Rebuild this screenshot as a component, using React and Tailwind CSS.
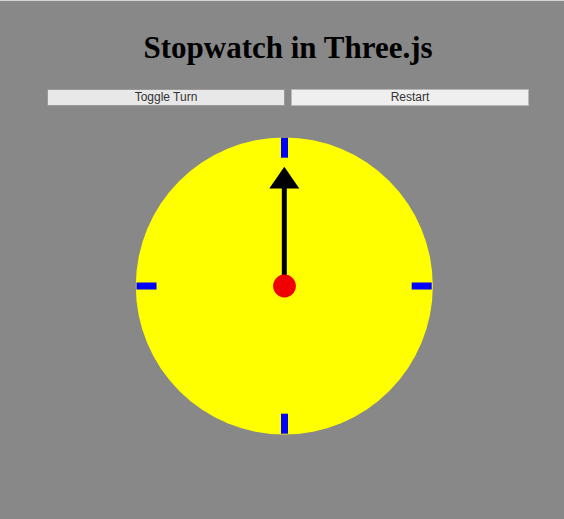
export default function App() {
  return (
    <div className="w-[564px] h-[519px] bg-[#888888] border-t border-[#d4d4d4] overflow-hidden flex flex-col">
      <h1
        className="mt-[31px] ml-[47px] w-[482px] text-center text-[31px] leading-[32px] font-bold text-black"
        style={{ fontFamily: '"Liberation Serif", "Times New Roman", serif' }}
      >
        Stopwatch in Three.js
      </h1>
      <div
        className="mt-[25px] ml-[47px] w-[482px] flex gap-[6px]"
        style={{ fontFamily: '"Liberation Sans", Arial, sans-serif' }}
      >
        <button className="flex-1 h-[17px] bg-[#e8e8e8] border border-[#9a9a9a] text-[12px] leading-[15px] text-[#333]">
          Toggle Turn
        </button>
        <button className="flex-1 h-[17px] bg-[#efefef] border border-[#b8b8b8] text-[12px] leading-[15px] text-[#333]">
          Restart
        </button>
      </div>
      <div className="mt-[30px] ml-[134px]">
        <svg width="300" height="300" viewBox="0 0 300 300">
          <circle cx="150.3" cy="150" r="148.5" fill="#ffff00" />
          <rect x="147" y="1.7" width="7" height="20" fill="#0000ff" />
          <rect x="147" y="277.7" width="7" height="20" fill="#0000ff" />
          <rect x="2.5" y="146.5" width="20" height="7" fill="#0000ff" />
          <rect x="277.7" y="146.5" width="20" height="7" fill="#0000ff" />
          <rect x="147.8" y="50" width="5" height="100" fill="#000" />
          <polygon points="150.3,30.7 135.3,52.5 165.3,52.5" fill="#000" />
          <circle cx="150.5" cy="150" r="11.4" fill="#f00000" />
        </svg>
      </div>
    </div>
  );
}
